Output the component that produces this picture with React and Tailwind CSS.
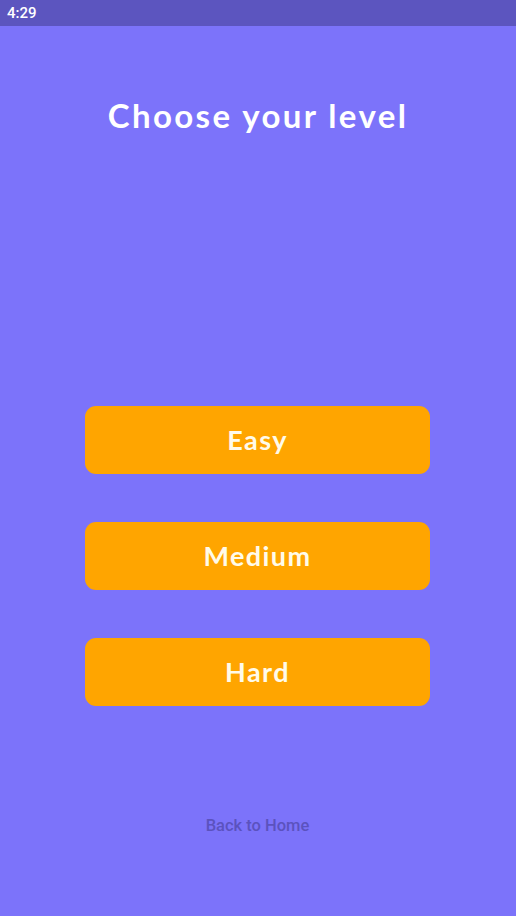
export default function App() {
  const levels = ["Easy", "Medium", "Hard"];
  return (
    <div className="w-[516px] h-[916px] bg-[#7c73fa] flex flex-col overflow-hidden">
      <div className="h-[26px] bg-[#5c55bf] flex items-center px-[7px] shrink-0">
        <span className="text-white text-[15px] font-medium" style={{ fontFamily: "Roboto, sans-serif" }}>4:29</span>
      </div>
      <h1
        className="mt-[69px] text-center text-white text-[33px] font-bold leading-[40px] tracking-[2.4px]"
        style={{ fontFamily: "Lato, 'Open Sans', sans-serif" }}
      >
        Choose your level
      </h1>
      <div className="mt-[271px] flex flex-col items-center gap-[48px] pr-[1px]">
        {levels.map((l) => (
          <button
            key={l}
            className="w-[345px] h-[68px] rounded-[11px] bg-[#ffa500] text-[#fffbea] text-[27px] font-bold tracking-[1.4px] flex items-center justify-center"
            style={{ fontFamily: "Lato, 'Open Sans', sans-serif" }}
          >
            {l}
          </button>
        ))}
      </div>
      <div className="mt-[107px] text-center pr-[1px]">
        <span className="text-[#5b52be] text-[16.5px] font-medium" style={{ fontFamily: "Roboto, sans-serif" }}>
          Back to Home
        </span>
      </div>
    </div>
  );
}
